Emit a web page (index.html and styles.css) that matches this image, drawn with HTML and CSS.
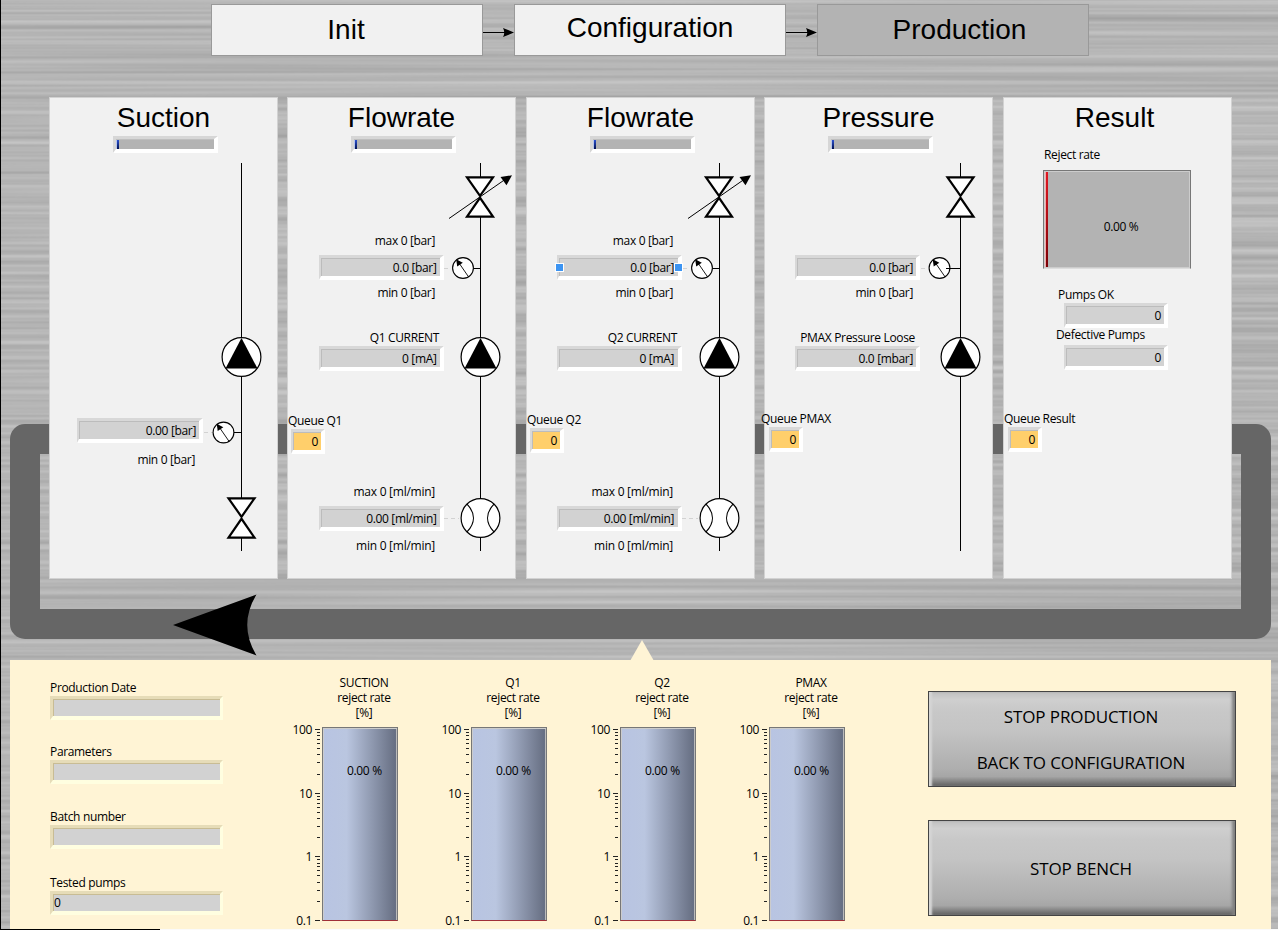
FILE: index.html
```html
<!DOCTYPE html>
<html lang="en">
<head>
<meta charset="utf-8">
<title>Pump test bench</title>
<link rel="stylesheet" href="styles.css">
</head>
<body>
<svg class="metal" width="1278" height="930" aria-hidden="true">
  <defs>
    <filter id="brushed" x="0" y="0" width="100%" height="100%" color-interpolation-filters="sRGB">
      <feTurbulence type="fractalNoise" baseFrequency="0.0012 0.2" numOctaves="2" seed="8"/>
      <feColorMatrix values="0.2 0 0 0 0.61  0.2 0 0 0 0.61  0.2 0 0 0 0.61  0 0 0 0 1"/>
    </filter>
    <symbol id="valve" viewBox="-16 -22 32 44" overflow="visible">
      <path d="M-13-19.7H13L0-1.2ZM-13 19.7H13L0 .8Z" fill="#fff" stroke="#000" stroke-width="2.2"/>
    </symbol>
    <symbol id="pump" viewBox="-21 -21 42 42" overflow="visible">
      <circle r="19.4" fill="#fff" stroke="#000" stroke-width="1.2"/>
      <path d="M0-19 16 11.5H-16Z"/>
    </symbol>
    <symbol id="gauge" viewBox="-12 -12 24 24" overflow="visible">
      <circle r="10.4" fill="#fff" stroke="#000" stroke-width="1.1"/>
      <path d="M5.5 8.8-4-5" stroke="#000" stroke-width=".9"/>
      <path d="M-6.8-8.8-5.8-1.6-.2-5.2Z"/>
    </symbol>
    <symbol id="meter" viewBox="-21 -21 42 42" overflow="visible">
      <circle r="19.4" fill="#fff" stroke="#000" stroke-width="1.2"/>
      <path d="M-13.5-13.9C-5-5-5 5-13.5 13.9M13.5-13.9C5-5 5 5 13.5 13.9" fill="none" stroke="#000" stroke-width="1.2"/>
    </symbol>
    <symbol id="adjust" viewBox="0 0 64 44" overflow="visible">
      <path d="M0 43.5 56 4.500" stroke="#000" stroke-width="1"/>
      <path d="M63 .3 51.5 2 57.500 10.300Z"/>
    </symbol>
    <symbol id="next" viewBox="0 0 31 12">
      <path d="M0 6.500H22" stroke="#000" stroke-width="1"/>
      <path d="M31 6.500 20 2Q22.500 6.500 20 11Z"/>
    </symbol>
    <symbol id="axis" viewBox="0 0 32 210">
      <g class="axis-text" text-anchor="end">
        <text x="22" y="15">100</text><text x="22" y="79">10</text><text x="22" y="142">1</text><text x="22" y="206">0.1</text>
      </g>
      <path class="ticks" d="M25 10.500h5M25 74.500h5M25 137.500h5M25 201.500h5
        M27 13.500h3M27 16.500h3M27 20.500h3M27 24.500h3M27 29.500h3M27 35.500h3M27 43.500h3M27 55.500h3
        M27 77.500h3M27 80.500h3M27 84.500h3M27 88.500h3M27 93.500h3M27 99.500h3M27 107.500h3M27 118.500h3
        M27 140.500h3M27 144.500h3M27 147.500h3M27 151.500h3M27 156.500h3M27 163.500h3M27 171.500h3M27 182.500h3"/>
    </symbol>
  </defs>
  <rect width="1278" height="930" filter="url(#brushed)"/>
</svg>
<div class="screen">
  <nav class="steps">
    <div class="step">Init</div>
    <svg class="next"><use href="#next"/></svg>
    <div class="step step-config">Configuration</div>
    <svg class="next"><use href="#next"/></svg>
    <div class="step step-active">Production</div>
  </nav>

  <main class="line">
    <div class="conveyor"></div>
    <svg class="direction" viewBox="0 0 84 62"><path d="M0 31 83.500.500Q65 31 83.500 61.500Z"/></svg>

    <section class="station">
      <svg class="diagram" viewBox="49 97 229 482">
        <path class="pipe" d="M241.500 163V551M233 432.500H241"/>
        <path class="signal" d="M204 432.500H213"/>
        <use href="#pump" x="220.500" y="336" width="42" height="42"/>
        <use href="#gauge" x="211.500" y="420.500" width="24" height="24"/>
        <use href="#valve" x="225.500" y="496" width="32" height="44"/>
      </svg>
      <div class="stack">
        <h2>Suction</h2>
        <div class="progress"><i></i></div>
        <div class="field suction-field">0.00 [bar]</div>
        <div class="label limit suction-limit">min 0 [bar]</div>
      </div>
    </section>

    <section class="station">
      <svg class="diagram" viewBox="287 97 229 482">
        <path class="pipe" d="M480.500 163V551M473 268.500H480"/>
        <path class="signal" d="M444 268.500H451M444 518.500H459"/>
        <use href="#valve" x="464" y="175" width="32" height="44"/>
        <use href="#adjust" x="449" y="175" width="64" height="44"/>
        <use href="#gauge" x="451" y="256" width="24" height="24"/>
        <use href="#pump" x="459.500" y="336" width="42" height="42"/>
        <use href="#meter" x="459.500" y="497" width="42" height="42"/>
      </svg>
      <div class="stack stack-q1">
        <h2>Flowrate</h2>
        <div class="progress"><i></i></div>
        <div class="label limit max-bar">max 0 [bar]</div>
        <div class="field">0.0 [bar]</div>
        <div class="label limit">min 0 [bar]</div>
        <div class="label current">Q1 CURRENT</div>
        <div class="field field-current">0 [mA]</div>
        <div class="label queue-label">Queue Q1</div>
        <div class="field queue">0</div>
        <div class="label limit max-flow">max 0 [ml/min]</div>
        <div class="field">0.00 [ml/min]</div>
        <div class="label limit min-flow">min 0 [ml/min]</div>
      </div>
    </section>

    <section class="station">
      <svg class="diagram" viewBox="526 97 229 482">
        <path class="pipe" d="M719.500 163V551M712 268.500H719"/>
        <path class="signal" d="M683 268.500H690M682 518.500H698"/>
        <use href="#valve" x="703" y="175" width="32" height="44"/>
        <use href="#adjust" x="688" y="175" width="64" height="44"/>
        <use href="#gauge" x="690" y="256" width="24" height="24"/>
        <use href="#pump" x="698.500" y="336" width="42" height="42"/>
        <use href="#meter" x="698.500" y="497" width="42" height="42"/>
      </svg>
      <div class="stack stack-q2">
        <h2>Flowrate</h2>
        <div class="progress"><i></i></div>
        <div class="label limit max-bar">max 0 [bar]</div>
        <div class="field selected">0.0 [bar]</div>
        <div class="label limit">min 0 [bar]</div>
        <div class="label current">Q2 CURRENT</div>
        <div class="field field-current">0 [mA]</div>
        <div class="label queue-label">Queue Q2</div>
        <div class="field queue">0</div>
        <div class="label limit max-flow">max 0 [ml/min]</div>
        <div class="field">0.00 [ml/min]</div>
        <div class="label limit min-flow">min 0 [ml/min]</div>
      </div>
    </section>

    <section class="station">
      <svg class="diagram" viewBox="764 97 229 482">
        <path class="pipe" d="M960.500 163V551"/>
        <path class="signal" d="M921 268.500H928"/>
        <use href="#valve" x="944.500" y="175" width="32" height="44"/>
        <use href="#gauge" x="927.500" y="256" width="24" height="24"/>
        <path class="pipe" d="M946 268.500H960"/>
        <use href="#pump" x="939.500" y="336" width="42" height="42"/>
      </svg>
      <div class="stack stack-pmax">
        <h2>Pressure</h2>
        <div class="progress"><i></i></div>
        <div class="field pmax-field">0.0 [bar]</div>
        <div class="label limit">min 0 [bar]</div>
        <div class="label current">PMAX Pressure Loose</div>
        <div class="field field-current">0.0 [mbar]</div>
        <div class="label queue-label">Queue PMAX</div>
        <div class="field queue">0</div>
      </div>
    </section>

    <section class="station">
      <div class="stack stack-result">
        <h2>Result</h2>
        <div class="label reject-label">Reject rate</div>
        <div class="reject"><span>0.00 %</span></div>
        <div class="label ok-label">Pumps OK</div>
        <div class="field count">0</div>
        <div class="label bad-label">Defective Pumps</div>
        <div class="field count">0</div>
        <div class="label queue-label">Queue Result</div>
        <div class="field queue">0</div>
      </div>
    </section>
  </main>

  <section class="summary">
    <svg class="pointer" viewBox="0 0 24 21"><path d="M12 0 24 21H0Z"/></svg>
    <div class="batch">
      <div class="label">Production Date</div><div class="entry"></div>
      <div class="label">Parameters</div><div class="entry"></div>
      <div class="label">Batch number</div><div class="entry"></div>
      <div class="label">Tested pumps</div><div class="entry">0</div>
    </div>
    <div class="charts">
      <div class="chart">
        <div class="chart-title">SUCTION<br>reject rate<br>[%]</div>
        <div class="plot"><svg class="axis"><use href="#axis"/></svg><div class="bar">0.00 %</div></div>
      </div>
      <div class="chart">
        <div class="chart-title">Q1<br>reject rate<br>[%]</div>
        <div class="plot"><svg class="axis"><use href="#axis"/></svg><div class="bar">0.00 %</div></div>
      </div>
      <div class="chart">
        <div class="chart-title">Q2<br>reject rate<br>[%]</div>
        <div class="plot"><svg class="axis"><use href="#axis"/></svg><div class="bar">0.00 %</div></div>
      </div>
      <div class="chart">
        <div class="chart-title">PMAX<br>reject rate<br>[%]</div>
        <div class="plot"><svg class="axis"><use href="#axis"/></svg><div class="bar">0.00 %</div></div>
      </div>
    </div>
    <div class="actions">
      <button class="action"><span>STOP PRODUCTION</span><span>BACK TO CONFIGURATION</span></button>
      <button class="action"><span>STOP BENCH</span></button>
    </div>
  </section>
  <footer class="edge"></footer>
</div>
</body>
</html>
```
FILE: styles.css
```css
* { box-sizing: border-box; }
body {
  margin: 0;
  width: 1278px;
  height: 930px;
  overflow: hidden;
  position: relative;
  background: #b6b6b6;
  color: #000;
  font: 12px/16px "Open Sans", "Noto Sans", sans-serif;
  letter-spacing: -0.34px;
}
.metal { position: absolute; left: 0; top: 0; }
.screen {
  position: relative;
  width: 1278px;
  height: 930px;
  box-shadow: inset 1px 0 #000;
  padding-top: 4px;
}

/* Step bar */
.steps { display: flex; padding-left: 211px; height: 93px; align-items: flex-start; }
.step {
  width: 272px;
  height: 52px;
  border: 1px solid #999;
  background: #f1f1f1;
  font: 28px/50px "Liberation Sans", Arial, sans-serif;
  letter-spacing: 0;
  text-align: center;
  padding-right: 2px;
}
.step-config { line-height: 45px; padding-right: 0; }
.step-active { background: #b3b3b3; line-height: 49px; padding: 0 0 0 13px; }
.next { width: 31px; height: 12px; margin-top: 22px; }

/* Station panels */
.line {
  position: relative;
  display: grid;
  grid-template-columns: 238px 239px 238px 239px 229px;
  height: 563px;
  padding-left: 49px;
  align-items: start;
}
.conveyor {
  position: absolute;
  left: 10px;
  top: 327px;
  width: 1261px;
  height: 215px;
  border: 30px solid #666;
  border-radius: 15px;
}
.direction { position: absolute; left: 173px; top: 496.500px; width: 84px; height: 62px; }
.station {
  position: relative;
  display: grid;
  width: 229px;
  height: 482px;
  background: #f1f1f1;
  box-shadow: inset 0 0 0 1px #d2d2d2;
}
.diagram, .stack { grid-area: 1 / 1; }
.diagram { width: 229px; height: 482px; }
.pipe { fill: none; stroke: #000; stroke-width: 1; }
.signal { stroke: #d2d2d2; stroke-dasharray: 4 3; }
.stack { position: relative; display: flex; flex-direction: column; min-width: 0; }
.stack > * { flex: none; }
h2 {
  margin: 0;
  height: 39px;
  font: 28px/42px "Liberation Sans", Arial, sans-serif;
  letter-spacing: 0;
  text-align: center;
}
.progress {
  width: 105px;
  height: 17px;
  margin-left: 64px;
  border: 4px solid;
  border-width: 3px 4px 4px 3px;
  padding-top: 1px;
  border-color: #d6d6d6 #fff #fff #d6d6d6;
  box-shadow: inset 0 1px #bebebe;
  background: #b3b3b3;
}
.progress i { display: block; width: 3px; height: 9px; border-left: 1px solid #b4c4ec; background: linear-gradient(#2a50d0, #001050); }
.label { height: 16px; white-space: nowrap; }
.limit { width: 148px; text-align: right; margin-top: 6px; }
.field {
  position: relative;
  width: 125px;
  height: 25px;
  margin: 6px 0 0 31px;
  border: 4px solid;
  border-width: 3px 4px 4px 2px;
  border-color: #d8d8d8 #fff #fff #d8d8d8;
  box-shadow: inset 1px 1px #bcbcbc;
  background: #d2d2d2;
  text-align: right;
  line-height: 17px;
  padding: 1px 3px 0 1px;
  white-space: nowrap;
}
.max-bar { margin-top: 80px; }
.field + .limit { margin-top: 5px; }
.current { width: 151px; margin-top: 29px; text-align: right; }
.field-current { margin-top: 0; }
.queue-label { margin: 42px 0 0 1px; }
.queue {
  width: 34px;
  margin: 0 0 0 4px;
  background: #ffcf6b;
}
.queue + .max-flow { margin-top: 30px; }
.max-flow + .field { margin-top: 6px; }
.field + .min-flow { margin-top: 7px; }
.max-flow, .min-flow { letter-spacing: -0.25px; }
.stack-q1 .field:not(.queue) { margin-left: 32px; padding-right: 3.500px; }
.stack-q1 .current { width: 152px; }
.stack-q2 .limit { width: 147px; }
.stack-q2 .field:not(.queue) { padding-right: 4px; }
.stack-q2 .queue-label { margin-top: 41px; }
.stack-q2 .max-flow { margin-top: 31px; }
.suction-field { margin: 265px 0 0 28px; width: 126px; }
.field + .suction-limit { width: 146px; margin-top: 9px; }
.pmax-field { margin-top: 102px; }
.stack-pmax .limit { width: 149px; }
.stack-pmax .queue-label { margin: 40px 0 0 -3px; }
.stack-pmax .queue { margin-left: 5px; }
.selected::before, .selected::after {
  content: "";
  position: absolute;
  top: 5px;
  width: 7px;
  height: 7px;
  background: #3c94f2;
  border: 1px solid #fff;
}
.selected::before { left: -4px; }
.selected::after { right: -5px; }
.stack-result h2 { padding-right: 6px; }
.reject-label { margin: 11px 0 7px 41px; }
.reject {
  width: 148px;
  height: 99px;
  margin-left: 40px;
  display: flex;
  border: 1px solid #777;
  border-bottom-color: #ddd;
  box-shadow: inset 0 0 0 1px #ccc;
  background: linear-gradient(90deg, #f2aaaa 1px, transparent 1px) 1px 1px / 2px 97px no-repeat, linear-gradient(#e01822, #780006) 2px 1px / 2px 97px no-repeat, #b3b3b3;
  align-items: center;
  justify-content: center;
  padding: 14px 0 0 8px;
}
.ok-label { margin: 18px 0 0 55px; }
.count { width: 104px; margin: 0 0 0 61px; }
.bad-label { margin: -1px 0 2px 53px; }
.count + .queue-label { margin: 41px 0 0 1px; }
.stack-result .queue { margin-left: 5px; }

/* Summary area */
.summary {
  position: relative;
  display: flex;
  margin-left: 10px;
  width: 1261px;
  height: 269px;
  background: #fff4d5;
}
.pointer { position: absolute; left: 620px; top: -20px; width: 24px; height: 21px; fill: #fff4d5; }
.batch { width: 272px; padding: 20px 0 0 40px; }
.entry {
  width: 173px;
  height: 24px;
  margin: 0 0 24px;
  border: 4px solid;
  border-width: 3px 3px 4px;
  border-color: #e6dcb8 #fffee0 #fffee0 #e6dcb8;
  box-shadow: inset 1px 1px #c8bc94;
  background: #d2d2d2;
  line-height: 16px;
  padding: 1px 0 0 1px;
}
.entry:nth-child(6) { margin-bottom: 26px; }
.entry:nth-child(4) { margin-bottom: 25px; }
.charts { display: grid; grid-template-columns: repeat(4, 149px); width: 636px; }
.chart { padding-top: 15px; }
.chart-title { height: 46px; width: 90px; margin-left: 37px; line-height: 15px; text-align: center; }
.plot { display: flex; height: 210px; margin-top: -1px; }
.axis { width: 32px; height: 210px; margin: -1px 0 0 8px; }
.axis-text { font-size: 12px; letter-spacing: -0.4px; }
.ticks { stroke: #222; }
.bar {
  width: 76px;
  height: 194px;
  margin-top: 7px;
  border: 1px solid #777;
  border-bottom: 1px solid #a03038;
  box-shadow: inset 1px 1px #ccc, inset -1px 0 #bbb;
  background: linear-gradient(90deg, #b8c4e2, #bac6e0 32%, #687084 97%);
  padding: 35px 0 0 24px;
}
.actions { padding: 31px 0 0 10px; display: flex; flex-direction: column; gap: 33px; }
.action {
  display: flex;
  flex-direction: column;
  align-items: center;
  justify-content: center;
  gap: 22px;
  width: 308px;
  height: 96px;
  padding: 2px 2px 0 0;
  border: 1px solid #444;
  border-radius: 0;
  background: linear-gradient(#c0c0c0, #cfcfcf 8%, #c8c8c8 20%, #c4c4c4 40%, #aeaeae 82%, #a6a6a6 90%, #606060);
  box-shadow: inset 4px 0 2px -1px #d4d4d4, inset -4px 0 3px -1px #808080;
  color: #000;
  font: 17px/24px "Open Sans", "Noto Sans", sans-serif;
  letter-spacing: -0.100px;
}
.edge { width: 1278px; height: 1px; background: linear-gradient(90deg, #000 160px, #fafafa 160px); }
```
